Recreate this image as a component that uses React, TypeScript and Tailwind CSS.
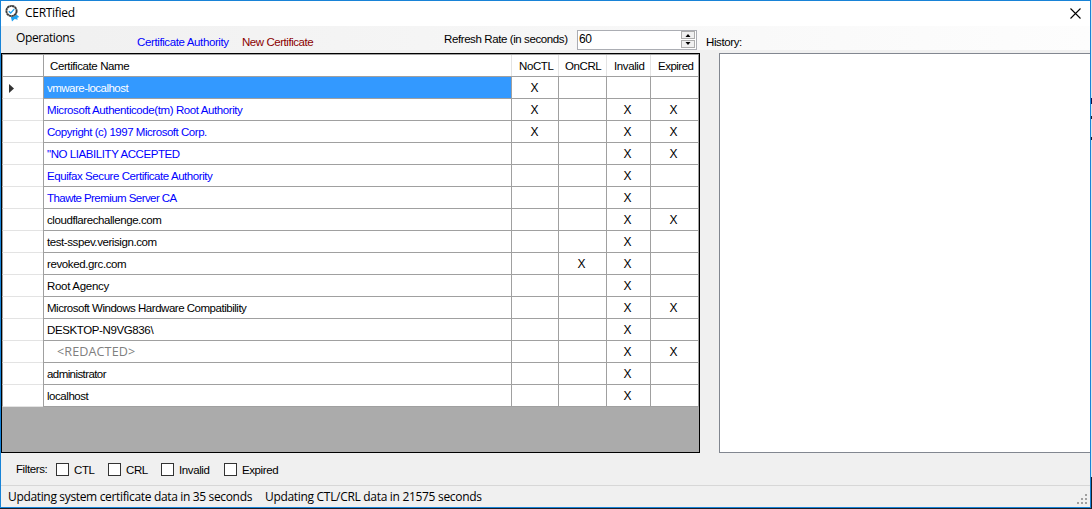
import React from "react";

type Tone = "sel" | "blue" | "black" | "redacted";
type Row = { name: string; tone: Tone; marks: string; cls: string };

const rows: Row[] = [
  { name: "vmware-localhost", tone: "sel", marks: "X...", cls: "tracking-[-0.52px]" },
  { name: "Microsoft Authenticode(tm) Root Authority", tone: "blue", marks: "X.XX", cls: "tracking-[-0.41px]" },
  { name: "Copyright (c) 1997 Microsoft Corp.", tone: "blue", marks: "X.XX", cls: "tracking-[-0.47px]" },
  { name: "\"NO LIABILITY ACCEPTED", tone: "blue", marks: "..XX", cls: "tracking-[-0.42px]" },
  { name: "Equifax Secure Certificate Authority", tone: "blue", marks: "..X.", cls: "tracking-[-0.43px]" },
  { name: "Thawte Premium Server CA", tone: "blue", marks: "..X.", cls: "tracking-[-0.56px]" },
  { name: "cloudflarechallenge.com", tone: "black", marks: "..XX", cls: "tracking-[-0.42px]" },
  { name: "test-sspev.verisign.com", tone: "black", marks: "..X.", cls: "tracking-[-0.42px]" },
  { name: "revoked.grc.com", tone: "black", marks: ".XX.", cls: "tracking-[-0.38px]" },
  { name: "Root Agency", tone: "black", marks: "..X.", cls: "tracking-[-0.3px]" },
  { name: "Microsoft Windows Hardware Compatibility", tone: "black", marks: "..XX", cls: "tracking-[-0.48px]" },
  { name: "DESKTOP-N9VG836\\", tone: "black", marks: "..X.", cls: "tracking-[-0.38px]" },
  { name: "<REDACTED>", tone: "redacted", marks: "..XX", cls: "tracking-[0.1px]" },
  { name: "administrator", tone: "black", marks: "..X.", cls: "tracking-[-0.58px]" },
  { name: "localhost", tone: "black", marks: "..X.", cls: "tracking-[-0.45px]" },
];

const tones: Record<Tone, string> = {
  sel: "bg-[#3399ff] text-white pl-[3px]",
  blue: "text-[#0000ff] pl-[3px]",
  black: "text-black pl-[3px]",
  redacted: "text-[#7f7f7f] pl-[13px] font-['Open_Sans',sans-serif] text-[12.6px]",
};

const colGrid = "grid grid-cols-[41px_1px_467px_1px_46px_1px_47px_1px_43px_1px_47px_1px]";

function Seal() {
  return (
    <svg className="ml-[3px] mt-[3px] h-[18px] w-[16px]" viewBox="0 0 16 18" fill="none">
      <path d="M6.500 11.500l6-1 2.800 2.500-2.100.7.500 2-3-.7-2.700 2.500z" fill="#1ba1f2" />
      <circle cx="7.500" cy="7" r="6" fill="#fff" />
      <circle cx="7.500" cy="7" r="5.100" stroke="#3c3c3c" strokeWidth="1.900" strokeDasharray="2.400 .27" />
      <path d="M4.800 7.200l1.900 1.900 3.500-4" stroke="#1ba1f2" strokeWidth="1.400" />
    </svg>
  );
}

function Filter({ label, cls }: { label: string; cls: string }) {
  return (
    <label className={"flex items-center " + cls}>
      <span className="h-[13px] w-[13px] border border-[#333] bg-white" />
      <span className="ml-[5px] pt-px">{label}</span>
    </label>
  );
}

export default function App() {
  return (
    <div className="flex h-[509px] w-[1092px] overflow-hidden whitespace-nowrap bg-[#1c1c24] font-['Liberation_Sans',Arial,sans-serif] text-[11.5px] leading-[14px] tracking-[-0.4px] text-black">
      <div className="flex h-[508px] w-[1091px] shrink-0 flex-col border border-[#1883d7] bg-[#f0f0f0]">
        <div className="flex h-[25px] shrink-0 justify-between bg-white">
          <div className="flex">
            <Seal />
            <span className="ml-[5px] mt-[4px] font-['Open_Sans',sans-serif] text-[12px] leading-[16px] tracking-[-0.3px]">CERTified</span>
          </div>
          <svg className="mr-[9px] mt-[7px] h-[11px] w-[11px]" viewBox="0 0 11 11" stroke="#000" strokeWidth="1.100">
            <path d="M.5.5l10 10M10.500.5l-10 10" />
          </svg>
        </div>
        <div className="flex h-[24px] shrink-0 items-start bg-gradient-to-r from-[#f0f0f0] to-[#fdfdfd]">
          <span className="ml-[15px] mt-[4px] w-[121px] font-['Open_Sans',sans-serif] text-[12px] leading-[16px] tracking-[-0.4px]">Operations</span>
          <span className="mt-[9px] w-[105px] tracking-[-0.38px] text-[#0000ff]">Certificate Authority</span>
          <span className="mt-[9px] w-[202px] tracking-[-0.45px] text-[#8b0000]">New Certificate</span>
          <span className="mt-[6px] w-[133px]">Refresh Rate (in seconds)</span>
          <div className="mt-[4px] flex h-[20px] w-[120px] justify-between border border-[#abadb3] bg-white">
            <span className="ml-[1px] mt-[1px] text-[12px]">60</span>
            <div className="flex h-[18px] w-[15px] flex-col gap-px">
              <svg className="h-[8px] w-[14px] border border-[#adadad] bg-[#f0f0f0]" viewBox="0 0 12 6"><path d="M3.500 5h5L6 2z" /></svg>
              <svg className="h-[8px] w-[14px] border border-[#adadad] bg-[#f0f0f0]" viewBox="0 0 12 6"><path d="M3.500 1h5L6 4z" /></svg>
            </div>
          </div>
          <span className="ml-[9px] mt-[9px]">History:</span>
        </div>
        <div className="mt-[3px] flex h-[400px] shrink-0">
          <div className="h-[400px] w-[699px] shrink-0 border border-black bg-[#ababab]">
            <div className="h-px bg-[#a0a0a0]" />
            <div className={colGrid + " h-[21px] grid-rows-[21px] bg-white leading-[22px]"}>
              <span className="border-l border-[#a0a0a0]" />
              <span className="bg-[#a0a0a0]" />
              <span className="pl-[6px]">Certificate Name</span>
              <span className="bg-[#e3e3e3]" />
              <span className="pl-[7px]">NoCTL</span>
              <span className="bg-[#e3e3e3]" />
              <span className="pl-[6px]">OnCRL</span>
              <span className="bg-[#e3e3e3]" />
              <span className="pl-[7px]">Invalid</span>
              <span className="bg-[#e3e3e3]" />
              <span className="pl-[7px] tracking-[-0.5px]">Expired</span>
              <span className="bg-[#a0a0a0]" />
            </div>
            <div className="h-px bg-[#a0a0a0]" />
            {rows.map((r, i) => (
              <div key={i} className={colGrid + " h-[22px] grid-rows-[22px] bg-white leading-[22px]"}>
                <span className="border-b border-l border-b-[#e3e3e3] border-l-[#a0a0a0]">
                  {i === 0 && (
                    <svg className="ml-[6px] mt-[7px] h-[9px] w-[6px]" viewBox="0 0 6 9"><path d="M0 0v9l5-4.500z" fill="#333" /></svg>
                  )}
                </span>
                <span className="bg-[#a0a0a0]" />
                <span className={"border-b border-[#a0a0a0] " + tones[r.tone]}>
                  <span className={r.cls}>{r.name}</span>
                </span>
                {r.marks.split("").map((m, j) => (
                  <React.Fragment key={j}>
                    <span className="bg-[#a0a0a0]" />
                    <span className={"border-b border-[#a0a0a0] text-center text-[12px] tracking-[0px] " + (j === 0 ? "pr-px" : "pr-[2px]")}>{m === "X" ? "X" : ""}</span>
                  </React.Fragment>
                ))}
                <span className="bg-[#a0a0a0]" />
              </div>
            ))}
          </div>
          <div className="ml-[19px] flex-1 border border-r-0 border-[#828790] bg-white" />
        </div>
        <div className="flex h-[32px] shrink-0 items-center">
          <span className="ml-[15px] w-[40px]">Filters:</span>
          <Filter label="CTL" cls="w-[52px]" />
          <Filter label="CRL" cls="w-[53px]" />
          <Filter label="Invalid" cls="w-[63px]" />
          <Filter label="Expired" cls="" />
        </div>
        <div className="flex h-[21px] shrink-0 justify-between border-t border-[#d7d7d7] font-['Open_Sans',sans-serif] text-[12px] leading-[21px] tracking-[-0.31px]">
          <div className="flex">
            <span className="ml-[7px] w-[257px] tracking-[-0.34px]">Updating system certificate data in 35 seconds</span>
            <span>Updating CTL/CRL data in 21575 seconds</span>
          </div>
          <svg className="mr-[2px] mt-[8px] h-[11px] w-[11px]" viewBox="0 0 11 11" fill="#a0a0a0">
            <path d="M8 0h2v2H8zM4 4h2v2H4zM8 4h2v2H8zM0 8h2v2H0zM4 8h2v2H4zM8 8h2v2H8z" />
          </svg>
        </div>
      </div>
      <div className="flex w-px shrink-0 flex-col bg-[#d9e3ea]">
        <div className="mt-[98px] h-[6px] bg-[#1a1040]" />
        <div className="mt-[12px] h-[3px] bg-[#1c1c24]" />
        <div className="mt-[18px] h-[3px] bg-[#1c1c24]" />
        <div className="mt-[337px] h-[32px] bg-[#1c1c24]" />
      </div>
    </div>
  );
}
